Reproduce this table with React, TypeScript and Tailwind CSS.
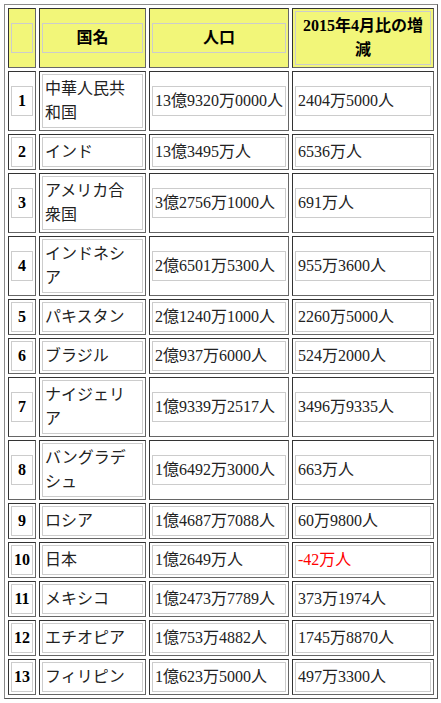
// Population table: country ranking with boxed cells

type Row = {
  rank: number
  name: string
  population: string
  change: string
  negative?: boolean
}

const rows: Row[] = [
  { rank: 1, name: '中華人民共和国', population: '13億9320万0000人', change: '2404万5000人' },
  { rank: 2, name: 'インド', population: '13億3495万人', change: '6536万人' },
  { rank: 3, name: 'アメリカ合衆国', population: '3億2756万1000人', change: '691万人' },
  { rank: 4, name: 'インドネシア', population: '2億6501万5300人', change: '955万3600人' },
  { rank: 5, name: 'パキスタン', population: '2億1240万1000人', change: '2260万5000人' },
  { rank: 6, name: 'ブラジル', population: '2億937万6000人', change: '524万2000人' },
  { rank: 7, name: 'ナイジェリア', population: '1億9339万2517人', change: '3496万9335人' },
  { rank: 8, name: 'バングラデシュ', population: '1億6492万3000人', change: '663万人' },
  { rank: 9, name: 'ロシア', population: '1億4687万7088人', change: '60万9800人' },
  { rank: 10, name: '日本', population: '1億2649万人', change: '-42万人', negative: true },
  { rank: 11, name: 'メキシコ', population: '1億2473万7789人', change: '373万1974人' },
  { rank: 12, name: 'エチオピア', population: '1億753万4882人', change: '1745万8870人' },
  { rank: 13, name: 'フィリピン', population: '1億623万5000人', change: '497万3300人' },
]

const cell =
  'p-[2px] align-middle border border-t-[#333] border-l-[#333] border-r-[#666] border-b-[#666]'
const box = 'border border-[#ccc] p-[2px] leading-[24px]'

export default function App() {
  return (
    <div className="p-1 bg-white">
      <table
        className="table-fixed w-[434px] border-separate border-spacing-[3px] border border-t-[#8a8a8a] border-l-[#8a8a8a] border-r-[#555] border-b-[#555] text-[16px] text-[#222]"
        style={{ fontFamily: '"Liberation Serif", "Noto Sans CJK JP", serif' }}
      >
        <thead>
          <tr className="bg-[#f2f679]">
            <th className={`${cell} w-[28px]`}>
              <div className={box}>&nbsp;</div>
            </th>
            <th className={`${cell} w-[107px]`}>
              <div className={`${box} text-center font-bold text-black`}>国名</div>
            </th>
            <th className={`${cell} w-[140px]`}>
              <div className={`${box} text-center font-bold text-black`}>人口</div>
            </th>
            <th className={`${cell} w-[142px]`}>
              <div className={`${box} text-center font-bold text-black`}>2015年4月比の増減</div>
            </th>
          </tr>
        </thead>
        <tbody>
          {rows.map((row) => (
            <tr key={row.rank}>
              <td className={cell}>
                <div className={`${box} text-center font-bold text-black`}>{row.rank}</div>
              </td>
              <td className={cell}>
                <div className={box}>{row.name}</div>
              </td>
              <td className={cell}>
                <div className={`${box} whitespace-nowrap overflow-hidden`}>{row.population}</div>
              </td>
              <td className={cell}>
                <div className={`${box} ${row.negative ? 'text-[#ff0000]' : ''}`}>{row.change}</div>
              </td>
            </tr>
          ))}
        </tbody>
      </table>
    </div>
  )
}
